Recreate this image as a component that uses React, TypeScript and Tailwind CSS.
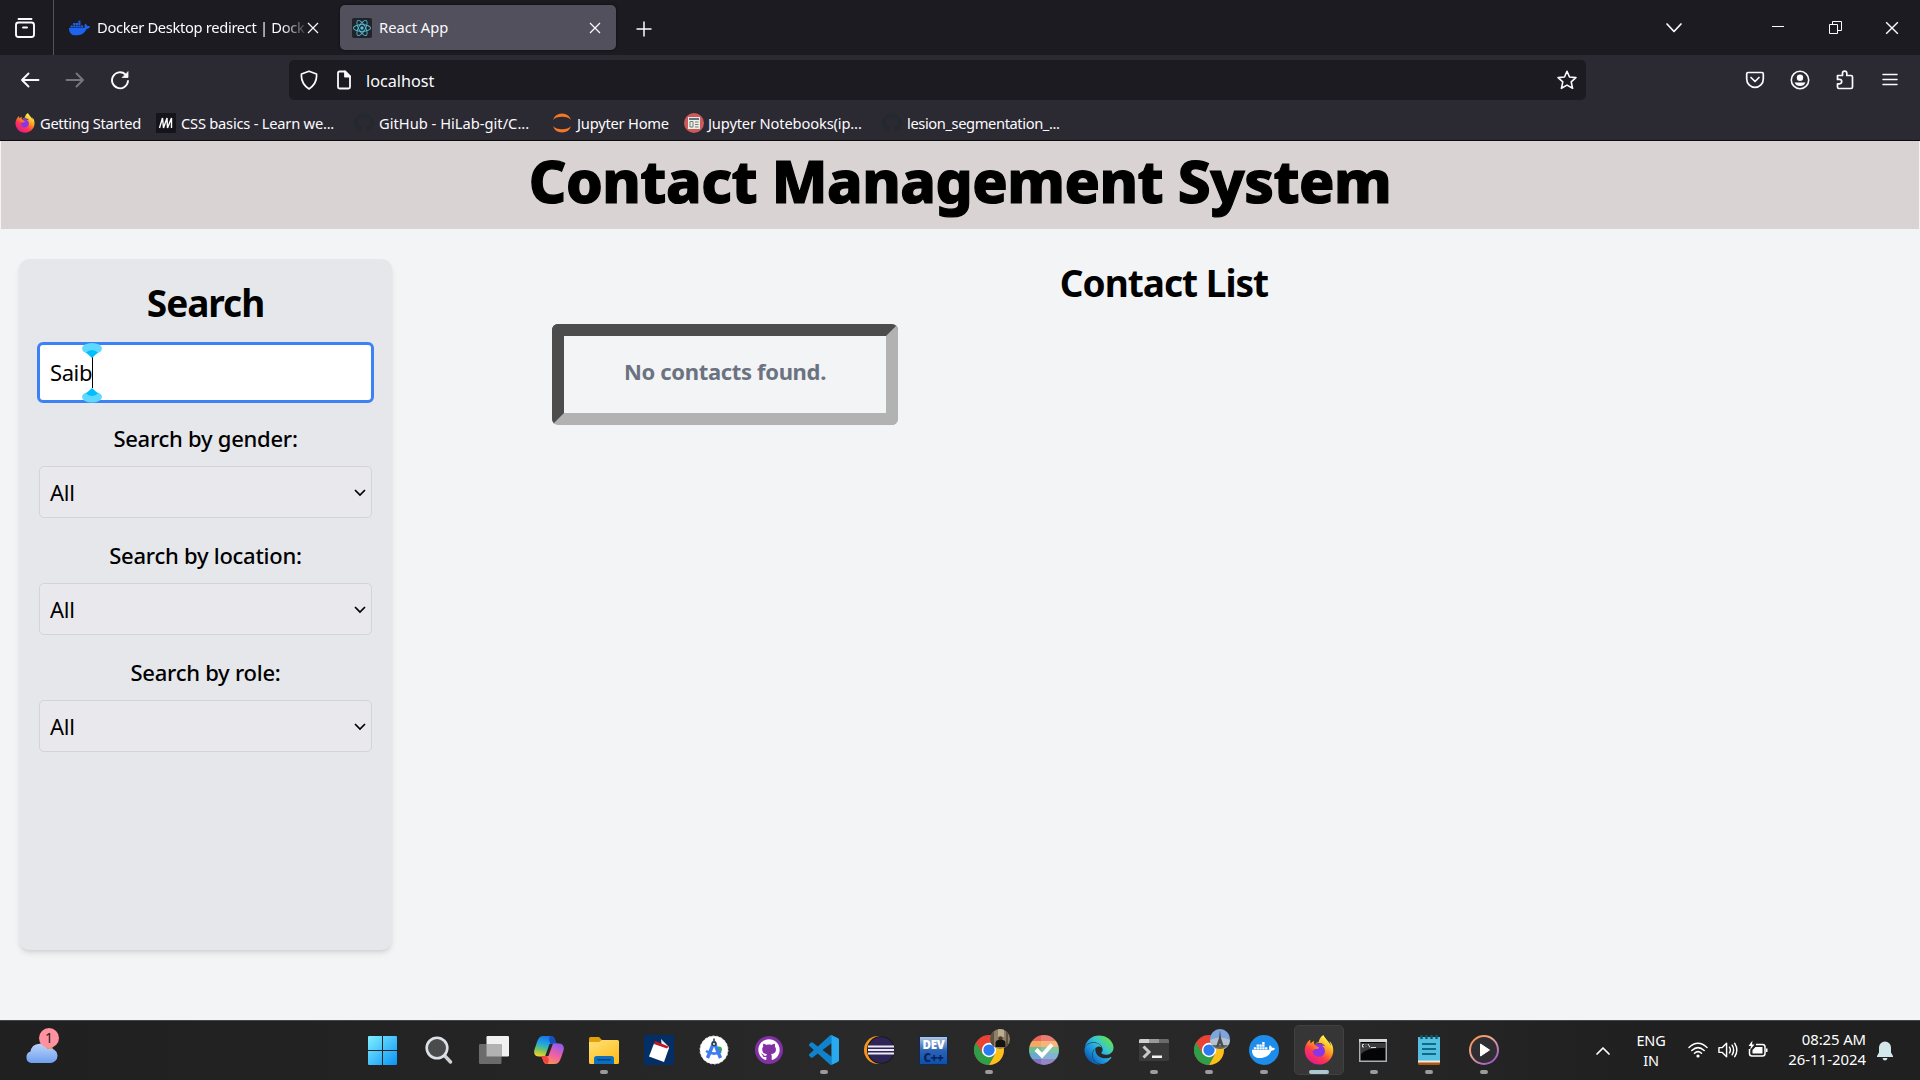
import React from "react";
import { FaDocker, FaFirefoxBrowser, FaGithub, FaEdge } from "react-icons/fa";
import { SiReact } from "react-icons/si";

const faces = "font-['Noto_Sans','Open_Sans',sans-serif]";

function Firefox({ className, id }: { className: string; id: string }) {
  return (
    <span className={`relative block ${className}`}>
      <svg className="absolute h-0 w-0">
        <defs>
          <linearGradient id={id} x1="0.85" y1="0.05" x2="0.25" y2="1">
            <stop offset="0.1" stopColor="#fff04a" />
            <stop offset="0.4" stopColor="#ff9a1f" />
            <stop offset="0.65" stopColor="#ff3a4a" />
            <stop offset="1" stopColor="#e0159a" />
          </linearGradient>
        </defs>
      </svg>
      <svg viewBox="0 0 32 32" className="absolute inset-0 h-full w-full">
        <circle cx="16" cy="17.5" r="8.5" fill="#8a35e8" />
      </svg>
      <FaFirefoxBrowser className="absolute inset-0 h-full w-full" style={{ fill: `url(#${id})` }} />
    </span>
  );
}

function Chrome() {
  return (
    <svg viewBox="0 0 48 48" className="h-[30px] w-[30px]">
      <circle cx="24" cy="24" r="24" fill="#ea4335" />
      <path d="M24 12.500H45A24 24 0 0 1 24 48L34 29.500Z" fill="#fbc116" />
      <path d="M3.200 12 13.800 30 24 35.500 34 29.500 24 48A24 24 0 0 1 3.200 12Z" fill="#2f9e46" />
      <circle cx="24" cy="24" r="11.500" fill="#fff" />
      <circle cx="24" cy="24" r="9" fill="#2a7bf0" />
    </svg>
  );
}

function Windows() {
  return (
    <svg viewBox="0 0 29 29" className="mr-[2px] h-[29px] w-[29px]">
      <defs>
        <linearGradient id="win" x1="0" y1="0" x2="29" y2="29" gradientUnits="userSpaceOnUse">
          <stop stopColor="#7ff0ff" />
          <stop offset="1" stopColor="#0a93f5" />
        </linearGradient>
      </defs>
      <path d="M0 1a1 1 0 0 1 1-1H14V14H0ZM15 0H28a1 1 0 0 1 1 1V14H15ZM0 15H14V29H1a1 1 0 0 1-1-1ZM15 15H29V28a1 1 0 0 1-1 1H15Z" fill="url(#win)" />
    </svg>
  );
}

function SearchGlass() {
  return (
    <svg viewBox="0 0 28 28" className="h-[28px] w-[28px]" fill="none">
      <path d="M19 19 25.500 26" stroke="#cfd3d8" strokeWidth="3.400" strokeLinecap="round" />
      <circle cx="12" cy="12" r="10.300" fill="#4a4b4c" stroke="#dde1e5" strokeWidth="2.600" />
    </svg>
  );
}

function TaskView() {
  return (
    <svg viewBox="0 0 30 28" className="ml-px h-[28px] w-[30px]">
      <rect x="7.500" y="0" width="22.500" height="20.500" rx="1.200" fill="#f1f1f1" />
      <rect x="0" y="8" width="22.500" height="20" rx="1.200" fill="#6b6b6b" />
      <rect x="7.500" y="8" width="15" height="12.500" fill="#b2b2b2" />
    </svg>
  );
}

function Copilot() {
  return (
    <svg viewBox="0 0 30 28" className="h-[28px] w-[30px]">
      <defs>
        <linearGradient id="cpa" x1="0.600" y1="0" x2="0.300" y2="1">
          <stop stopColor="#1a6fe0" />
          <stop offset="0.400" stopColor="#1ea5e6" />
          <stop offset="0.700" stopColor="#6cc36a" />
          <stop offset="1" stopColor="#f2d226" />
        </linearGradient>
        <linearGradient id="cpb" x1="0.800" y1="0" x2="0.300" y2="1">
          <stop stopColor="#8a5cf0" />
          <stop offset="0.500" stopColor="#ee5fa8" />
          <stop offset="1" stopColor="#ff9350" />
        </linearGradient>
      </defs>
      <path d="M7 20.500 H11 L15.500 8H24.500C22.500 8 21.800 6.500 21 4 20 1 19 0 17 0H9C5.500 0 4 3 2.500 7.500L.5 13.500C-.8 18 1.500 20.500 5 20.500Z" fill="url(#cpa)" />
      <path d="M16.500 0C19 0 20 1.500 21 4 21.800 6.500 22.500 8 24.500 8H17C15 6 14.500 2 16.500 0Z" fill="#154fc0" />
      <path d="M23 7.500H19L14.500 20H5.500C7.500 20 8.200 21.500 9 24 10 27 11 28 13 28H21C24.500 28 26 25 27.500 20.500L29.500 14.500C30.800 10 28.500 7.500 25 7.500Z" fill="url(#cpb)" />
      <path d="M13.500 28C11 28 10 26.500 9 24 8.200 21.500 7.500 20 5.500 20H13C15 22 15.500 26 13.500 28Z" fill="#f0453c" />
    </svg>
  );
}

function Explorer() {
  return (
    <svg viewBox="0 0 30 27" className="h-[27px] w-[30px]">
      <defs>
        <linearGradient id="fold" x1="0" y1="0" x2="0.700" y2="1">
          <stop stopColor="#ffe07a" />
          <stop offset="1" stopColor="#ffbf1f" />
        </linearGradient>
      </defs>
      <path d="M0 1.500Q0 0 1.500 0H10L13 3H28V9H0Z" fill="#e0a008" />
      <path d="M0 5H10L13 3H28.500Q30 3 30 4.500V25.500Q30 27 28.500 27H1.500Q0 27 0 25.500Z" fill="url(#fold)" />
      <path d="M5 27V21.500Q5 19 7.500 19H22.500Q25 19 25 21.500V27Z" fill="#0b70bf" />
      <rect x="8" y="22" width="14" height="1.500" rx="0.700" fill="#0a4377" />
    </svg>
  );
}

function CardBox() {
  return (
    <svg viewBox="0 0 30 30" className="h-[30px] w-[30px]">
      <rect width="30" height="30" fill="#042f66" />
      <path d="M17 4 25 12 19 24.500Z" fill="#e9eef5" />
      <path d="M10 8.500 25 13 20 27 5 21.500Z" fill="#fff" />
      <path d="M11 6 24.500 11.500 23 13.500 10 9Z" fill="#c9141f" />
    </svg>
  );
}

function AndroidStudio() {
  return (
    <svg viewBox="0 0 30 30" className="h-[30px] w-[30px]" fill="none">
      <circle cx="15" cy="15" r="14" fill="#fff" stroke="#e6e8ea" strokeWidth="1" strokeDasharray="2 2" />
      <circle cx="20" cy="14.500" r="3" fill="#34a853" />
      <path d="M15 7 8.500 23M15 7 21.500 23" stroke="#3d7df0" strokeWidth="3.400" />
      <path d="M7 16Q15 21 22 16.500" stroke="#3d7df0" strokeWidth="2.600" />
      <circle cx="15" cy="8.500" r="2.600" fill="#2c3f4c" />
      <circle cx="15" cy="9" r="1" fill="#fff" />
      <path d="M15 3.500V6" stroke="#2c3f4c" strokeWidth="1.600" />
    </svg>
  );
}

function GithubDesktop() {
  return (
    <span className="flex h-[28px] w-[28px] items-center justify-center rounded-full bg-[#8430a5]">
      <FaGithub className="h-[22px] w-[22px] text-white" />
    </span>
  );
}

function VsCode() {
  return (
    <svg viewBox="0 0 24 24" className="h-[30px] w-[30px]">
      <path
        d="M23.15 2.587L18.21.21a1.494 1.494 0 0 0-1.705.29l-9.46 8.63-4.12-3.128a.999.999 0 0 0-1.276.057L.327 7.261A1 1 0 0 0 .326 8.74L3.899 12 .326 15.26a1 1 0 0 0 .001 1.479L1.65 17.94a.999.999 0 0 0 1.276.057l4.12-3.128 9.46 8.63a1.492 1.492 0 0 0 1.704.29l4.942-2.377A1.5 1.5 0 0 0 24 20.06V3.939a1.5 1.5 0 0 0-.85-1.352zm-5.146 14.861L10.826 12l7.178-5.448v10.896z"
        fill="#0f83cc"
      />
      <path d="M18 .2 23.150 2.587A1.500 1.500 0 0 1 24 3.940V20.060A1.500 1.500 0 0 1 23.150 21.400L18.200 23.800Z" fill="#29a9f0" />
    </svg>
  );
}

function Eclipse() {
  return (
    <svg viewBox="0 0 30 30" className="h-[30px] w-[30px]">
      <circle cx="14" cy="15" r="14" fill="#f7941e" />
      <circle cx="17" cy="15" r="14" fill="#1d1b20" />
      <circle cx="17" cy="15" r="12.800" fill="#2f2458" />
      <path d="M4 11.500H30M4 15H30M4 18.500H30" stroke="#ece9f4" strokeWidth="1.800" />
    </svg>
  );
}

function DevCpp() {
  return (
    <span className="flex h-[29px] w-[29px] flex-col items-center border border-[#0c2a58] bg-gradient-to-b from-[#b5c5da] via-[#2a63b5] to-[#0d4fae] font-['Noto_Sans','Open_Sans',sans-serif] text-[11.500px] font-black leading-[13px] tracking-[-0.300px]">
      <span className="mt-px block h-[13px] text-white">DEV</span>
      <span className="block h-[13px] text-[#07255a]">C++</span>
    </span>
  );
}

function ChromeWork() {
  return (
    <span className="relative block">
      <Chrome />
      <svg viewBox="0 0 20 20" className="absolute -top-[6px] left-[16px] h-[20px] w-[20px]">
        <clipPath id="work">
          <circle cx="10" cy="10" r="10" />
        </clipPath>
        <g clipPath="url(#work)">
          <rect width="20" height="20" fill="#8e7f66" />
          <path d="M8 0H14V8H8Z" fill="#b9ad92" />
          <path d="M0 0H4V20H0ZM16 2H18V20H16Z" fill="#5d5242" />
          <circle cx="10.500" cy="9.500" r="2.200" fill="#4a372d" />
          <path d="M5.500 18V14Q5.500 10.800 10.500 10.800 15.500 10.800 15.500 14V18Z" fill="#15130f" />
        </g>
      </svg>
    </span>
  );
}

function ChromeTravel() {
  return (
    <span className="relative block">
      <Chrome />
      <svg viewBox="0 0 20 20" className="absolute -top-[6px] left-[16px] h-[20px] w-[20px]">
        <circle cx="10" cy="10" r="10" fill="#7fa6dc" />
        <path d="M0 11Q10 6 20 11A10 10 0 0 1 0 11Z" fill="#b3c3d3" />
        <path d="M2 16H18A10 10 0 0 1 2 16Z" fill="#5e6b5c" />
        <path d="M10 1 11 9 14 18H12L10 14.500 8 18H6L9 9Z" fill="#4f4a4b" />
      </svg>
    </span>
  );
}

function RainbowCheck() {
  return (
    <svg viewBox="0 0 30 30" className="h-[30px] w-[30px]">
      <clipPath id="rb">
        <circle cx="15" cy="15" r="15" />
      </clipPath>
      <g clipPath="url(#rb)">
        <rect width="30" height="6" fill="#e8665a" />
        <rect y="6" width="30" height="6" fill="#f3a863" />
        <rect y="12" width="30" height="6" fill="#6dbd94" />
        <rect y="18" width="30" height="6" fill="#6ba7cf" />
        <rect y="24" width="30" height="6" fill="#8670bd" />
        <rect x="12" width="18" height="30" fill="#fff" opacity="0.150" />
      </g>
      <path d="M7 14.500 13 20.500 23 9.500" stroke="#fff" strokeWidth="4" fill="none" />
    </svg>
  );
}

function Edge() {
  return (
    <>
      <svg className="absolute h-0 w-0">
        <linearGradient id="edge" x1="0.900" y1="0.200" x2="0.200" y2="0.900">
          <stop stopColor="#5fe05a" />
          <stop offset="0.350" stopColor="#35c4d8" />
          <stop offset="0.700" stopColor="#1a8fdc" />
          <stop offset="1" stopColor="#0c58a8" />
        </linearGradient>
      </svg>
      <FaEdge className="h-[30px] w-[30px]" style={{ fill: "url(#edge)" }} />
    </>
  );
}

function Terminal() {
  return (
    <svg viewBox="0 0 30 22" className="h-[22px] w-[30px]">
      <rect width="30" height="22" rx="1.500" fill="#3a3a3a" />
      <path d="M0 4V1.500Q0 0 1.500 0H10V4Z" fill="#d0d0d0" />
      <path d="M10 0H20V4H10Z" fill="#9a9a9a" />
      <path d="M20 0H28.500Q30 0 30 1.500V4H20Z" fill="#6b6b6b" />
      <path d="M4.500 7.500 10 13 4.500 18.500" fill="none" stroke="#c9c9c9" strokeWidth="3" />
      <rect x="13" y="16.500" width="10" height="2.500" fill="#f2f2f2" />
    </svg>
  );
}

function DockerApp() {
  return (
    <span className="flex h-[30px] w-[30px] items-center justify-center rounded-full bg-[#1d8ceb]">
      <FaDocker className="h-[24px] w-[23px] text-white" />
    </span>
  );
}

function Cmd() {
  return (
    <svg viewBox="0 0 28 23" className="mr-px h-[23px] w-[28px]">
      <rect x="0.750" y="0.750" width="26.500" height="21.500" fill="#050505" stroke="#a9b0b4" strokeWidth="1.500" />
      <path d="M0 0H28V3H0Z" fill="#d3d8db" />
      <path d="M2 4H26V9Q8 8 2 15Z" fill="#3b3b3b" />
      <path d="M5 5.500H3.500V8H5M7 5.500V6M7 7.500V8M9 5 11 8.500M12 8.500H17" stroke="#ddd" strokeWidth="1" fill="none" />
    </svg>
  );
}

function Notepad() {
  return (
    <svg viewBox="0 0 22 30" className="h-[30px] w-[22px]">
      <rect y="2" width="22" height="26" fill="#54bfe0" />
      <path d="M0 25.500H22V28H0Z" fill="#efe9e0" />
      <path d="M0 27.500H22V28.500Q22 30 20.500 30H1.500Q0 30 0 28.500Z" fill="#b1560f" />
      <path d="M3.500 0V4M8.500 0V4M13.500 0V4M18.500 0V4" stroke="#0f5770" strokeWidth="2.400" />
      <path d="M4 9H18M4 14H18M4 19H18" stroke="#0f6a86" strokeWidth="1.800" />
    </svg>
  );
}

function MediaPlayer() {
  return (
    <svg viewBox="0 0 30 30" className="h-[30px] w-[30px]">
      <defs>
        <linearGradient id="mp" x1="0" y1="0" x2="0.800" y2="1">
          <stop stopColor="#ff8a3c" />
          <stop offset="0.450" stopColor="#e8a898" />
          <stop offset="1" stopColor="#9a55c8" />
        </linearGradient>
      </defs>
      <circle cx="15" cy="15" r="14" fill="#2f2f33" stroke="url(#mp)" strokeWidth="2" />
      <path d="M11.500 9 20.500 15 11.500 21Z" fill="#fff" stroke="#fff" strokeLinejoin="round" />
    </svg>
  );
}

type App = { name: string; icon: React.ReactNode; state?: "open" | "active" };

const apps: App[] = [
  { name: "Start", icon: <Windows /> },
  { name: "Search", icon: <SearchGlass /> },
  { name: "Task View", icon: <TaskView /> },
  { name: "Copilot", icon: <Copilot /> },
  { name: "File Explorer", icon: <Explorer />, state: "open" },
  { name: "Cards", icon: <CardBox /> },
  { name: "Android Studio", icon: <AndroidStudio /> },
  { name: "GitHub Desktop", icon: <GithubDesktop /> },
  { name: "Visual Studio Code", icon: <VsCode />, state: "open" },
  { name: "Eclipse", icon: <Eclipse /> },
  { name: "Dev-C++", icon: <DevCpp /> },
  { name: "Chrome", icon: <ChromeWork />, state: "open" },
  { name: "Tasks", icon: <RainbowCheck /> },
  { name: "Edge", icon: <Edge /> },
  { name: "Terminal", icon: <Terminal />, state: "open" },
  { name: "Chrome (travel)", icon: <ChromeTravel />, state: "open" },
  { name: "Docker Desktop", icon: <DockerApp />, state: "open" },
  { name: "Firefox", icon: <Firefox id="ff-task" className="h-[30px] w-[30px]" />, state: "active" },
  { name: "Command Prompt", icon: <Cmd />, state: "open" },
  { name: "Notepad", icon: <Notepad />, state: "open" },
  { name: "Media Player", icon: <MediaPlayer />, state: "open" },
];

function Cross({ className }: { className: string }) {
  return (
    <svg viewBox="0 0 12 12" className={className} fill="none" stroke="#fbfbfe" strokeWidth="1.200">
      <path d="M1 1 11 11M11 1 1 11" />
    </svg>
  );
}

function TabStrip() {
  return (
    <div className="flex h-[55px] bg-[#1c1b22] text-[14.700px] text-[#fbfbfe]">
      <div className="flex w-[54px] items-center border-r border-[#55545c] pl-[14px]">
        <svg viewBox="0 0 22 22" className="h-[22px] w-[22px]" fill="none" stroke="#fbfbfe" strokeWidth="1.900" strokeLinecap="round">
          <path d="M4.500 2H17.500" />
          <rect x="2" y="5.500" width="18" height="14.500" rx="2.500" />
          <path d="M9 10.500H13" />
        </svg>
      </div>
      <div className="flex w-[286px] items-center pl-[15px]">
        <FaDocker className="mr-[7px] h-[24px] w-[21px] text-[#1d63ed]" />
        <div className="w-[209px] whitespace-nowrap tracking-[-0.320px] [mask-image:linear-gradient(to_right,black_185px,transparent_212px)]">
          Docker Desktop redirect | Dock
        </div>
        <Cross className="ml-px h-[12px] w-[12px]" />
      </div>
      <div className="mt-[5px] flex h-[45px] w-[276px] items-center rounded-[5px] bg-[#52505d] pl-[12px] shadow-[0_0_3px_rgba(0,0,0,0.6)]">
        <span className="mr-[7px] flex h-[20px] w-[20px] items-center justify-center rounded-[2px] bg-[#20232a]">
          <SiReact className="h-[18px] w-[18px] text-[#57c4dc]" />
        </span>
        <span>React App</span>
        <Cross className="ml-auto mr-[15px] h-[12px] w-[12px]" />
      </div>
      <svg viewBox="0 0 16 16" className="ml-[20px] mt-[21px] h-[16px] w-[16px]" stroke="#fbfbfe" strokeWidth="1.500">
        <path d="M8 0.500V15.500M0.500 8H15.500" />
      </svg>
      <div className="ml-auto flex items-center">
        <svg viewBox="0 0 18 12" className="mr-[89px] h-[12px] w-[18px]" fill="none" stroke="#fbfbfe" strokeWidth="1.700" strokeLinecap="round" strokeLinejoin="round">
          <path d="M2 2 9 9.500 16 2" />
        </svg>
        <span className="mb-[2px] mr-[45px] h-px w-[12px] bg-[#fbfbfe]" />
        <svg viewBox="0 0 13 13" className="mr-[43px] h-[13px] w-[13px]" fill="none" stroke="#fbfbfe">
          <path d="M0.500 3.500H8.500V12.500H0.500ZM3.500 3.500V0.500H12.500V9.500H8.500" />
        </svg>
        <Cross className="mr-[21px] h-[14px] w-[14px]" />
      </div>
    </div>
  );
}

function Toolbar() {
  return (
    <div className="flex h-[50px] items-center bg-[#2b2a33] text-[#fbfbfe]">
      <svg viewBox="0 0 20 20" className="ml-[20px] h-[20px] w-[20px]" fill="none" stroke="#fbfbfe" strokeWidth="1.900" strokeLinecap="round" strokeLinejoin="round">
        <path d="M18.500 10H2M8.500 3.500 2 10 8.500 16.500" />
      </svg>
      <svg viewBox="0 0 20 20" className="ml-[25px] h-[20px] w-[20px]" fill="none" stroke="#77767f" strokeWidth="1.900" strokeLinecap="round" strokeLinejoin="round">
        <path d="M1.500 10H18M11.500 3.500 18 10 11.500 16.500" />
      </svg>
      <svg viewBox="0 0 20 20" className="ml-[25px] h-[20px] w-[20px]" fill="none" stroke="#fbfbfe" strokeWidth="1.900" strokeLinecap="round" strokeLinejoin="round">
        <path d="M18 11A8 8 0 1 1 15.500 4.500" />
        <path d="M18 2V7.500H12.500Z" fill="#fbfbfe" strokeWidth="0.800" />
      </svg>
      <div className="ml-[159px] flex h-[40px] w-[1297px] items-center rounded-[5px] bg-[#1c1b22] pl-[10px] pr-[9px]">
        <svg viewBox="0 0 20 20" className="h-[20px] w-[20px]" fill="none" stroke="#fbfbfe" strokeWidth="1.700" strokeLinejoin="round">
          <path d="M10 1.200 17.500 4Q18.500 13 10 19 1.500 13 2.500 4Z" />
        </svg>
        <svg viewBox="0 0 20 20" className="ml-[15px] h-[20px] w-[20px]" fill="none" stroke="#fbfbfe" strokeWidth="1.800" strokeLinejoin="round">
          <path d="M11 1.500H5.500Q4 1.500 4 3V17Q4 18.500 5.500 18.500H14.500Q16 18.500 16 17V6.500Z" />
          <path d="M11 1.500V6.500H16Z" fill="#fbfbfe" />
        </svg>
        <span className="ml-[12px] mt-[2px] text-[16.200px] leading-[24px]">localhost</span>
        <svg viewBox="0 0 20 20" className="ml-auto h-[20px] w-[20px]" fill="none" stroke="#fbfbfe" strokeWidth="1.600" strokeLinejoin="round">
          <path d="M10 1.300 12.500 7 18.900 7.600 14.200 11.900 15.600 18.300 10 15.100 4.400 18.300 5.800 11.900 1.100 7.600 7.500 7Z" />
        </svg>
      </div>
      <div className="ml-auto flex items-center pr-[20px]">
        <svg viewBox="0 0 20 20" className="h-[20px] w-[20px]" fill="none" stroke="#fbfbfe" strokeWidth="1.700" strokeLinecap="round" strokeLinejoin="round">
          <path d="M3 2.500H17Q18.300 2.500 18.300 4V9A8.300 8.300 0 0 1 1.700 9V4Q1.700 2.500 3 2.500Z" />
          <path d="M6 7.500 10 11.500 14 7.500" />
        </svg>
        <svg viewBox="0 0 20 20" className="ml-[25px] h-[20px] w-[20px]" fill="none" stroke="#fbfbfe" strokeWidth="1.600">
          <circle cx="10" cy="10" r="8.700" />
          <circle cx="10" cy="7.700" r="3.200" fill="#fbfbfe" stroke="none" />
          <path d="M4.500 12.500H15.500Q14 16 10 16 6 16 4.500 12.500Z" fill="#fbfbfe" stroke="none" />
        </svg>
        <svg viewBox="0 0 20 20" className="ml-[25px] h-[20px] w-[20px]" fill="none" stroke="#fbfbfe" strokeWidth="1.700" strokeLinejoin="round">
          <path d="M2.500 5.500H7.500V3.200A2.100 2.100 0 0 1 11.800 3.200V5.500H16Q17.500 5.500 17.500 7V17Q17.500 18.500 16 18.500H4Q2.500 18.500 2.500 17V13.800H4.500A2.200 2.200 0 0 0 4.500 9.400H2.500Z" />
        </svg>
        <svg viewBox="0 0 20 20" className="ml-[25px] h-[20px] w-[20px]" stroke="#fbfbfe" strokeWidth="1.500" strokeLinecap="round">
          <path d="M3 4.500H17M3 9.500H17M3 14.500H17" />
        </svg>
      </div>
    </div>
  );
}

function JupyterHome() {
  return (
    <svg viewBox="0 0 20 20" className="h-[20px] w-[20px]" fill="#f37726">
      <path d="M1 7Q3 .5 10 .5 17 .5 19 7 16 3.800 10 3.800 4 3.800 1 7ZM1 13Q3 19.500 10 19.500 17 19.500 19 13 16 16.200 10 16.200 4 16.200 1 13Z" />
    </svg>
  );
}

function BookmarksBar() {
  return (
    <div className="flex h-[36px] items-center whitespace-nowrap border-b border-[#0c0c0d] bg-[#2b2a33] pl-[15px] pt-px text-[14.700px] text-[#fbfbfe]">
      <div className="flex w-[141px] items-center gap-[5px]">
        <Firefox id="ff-mark" className="h-[20px] w-[20px]" />
        <span className="tracking-[-0.310px]">Getting Started</span>
      </div>
      <div className="flex w-[198px] items-center gap-[5px]">
        <svg viewBox="0 0 20 20" className="h-[20px] w-[20px]">
          <rect width="20" height="20" fill="#15141a" />
          <path d="M3.500 15 6.500 5 7.500 15 11 5 11.500 15 15.500 5V15" fill="none" stroke="#fff" strokeWidth="1.400" />
        </svg>
        <span className="tracking-[-0.230px]">CSS basics - Learn we...</span>
      </div>
      <div className="flex w-[198px] items-center gap-[5px]">
        <FaGithub className="h-[20px] w-[20px] text-[#24292e]" />
        <span>GitHub - HiLab-git/C...</span>
      </div>
      <div className="flex w-[132px] items-center gap-[5px]">
        <JupyterHome />
        <span className="tracking-[-0.220px]">Jupyter Home</span>
      </div>
      <div className="flex w-[198px] items-center gap-[4px]">
        <svg viewBox="0 0 20 20" className="h-[20px] w-[20px]">
          <circle cx="10" cy="10" r="10" fill="#cc5a5a" />
          <rect x="4" y="4" width="12" height="12" fill="#f0ece0" />
          <path d="M5 6H15" stroke="#2f4a5c" strokeWidth="1.500" />
          <path d="M6 8.500H9V14H6ZM11 9H14.500M11 11.500H14.500M11 14H14.500" stroke="#6a7d88" fill="none" />
        </svg>
        <span className="tracking-[-0.150px]">Jupyter Notebooks(ip...</span>
      </div>
      <div className="flex items-center gap-[5px]">
        <FaGithub className="h-[20px] w-[20px] text-[#24292e]" />
        <span className="tracking-[-0.400px]">lesion_segmentation_...</span>
      </div>
    </div>
  );
}

function SelectField({ label }: { label: string }) {
  return (
    <div className="flex h-[117px] flex-col items-stretch">
      <label className="mt-[18px] text-center text-[22px] font-medium leading-[34px] tracking-[-0.260px]">{label}</label>
      <div className="mt-[11px] flex h-[52px] items-center justify-between rounded-[5px] border border-[#d1d5db] bg-[#e9e9ed] pl-[10px] pr-[5px] text-[22px]">
        <span className="tracking-[-0.200px]">All</span>
        <svg viewBox="0 0 12 8" className="mt-px h-[8px] w-[12px]" fill="none" stroke="#000" strokeWidth="1.700">
          <path d="M1 1 6 6 11 1" />
        </svg>
      </div>
    </div>
  );
}

function SearchPanel() {
  return (
    <aside className="ml-[19px] mt-[30px] h-[691px] w-[373px] rounded-[10px] bg-[#e5e7eb] px-[20px] pt-[21px] shadow-md">
      <h2 className="text-center text-[37px] font-bold leading-[45px] tracking-[-1.050px]">Search</h2>
      <div className="relative -mx-[2px] mt-[17px] flex h-[61px] items-center rounded-[6px] border-[3px] border-[#3b82f6] bg-white pl-[10px] text-[22px]">
        <span className="tracking-[-0.400px]">Saib</span>
        <span className="absolute left-[52px] top-[12px] h-[31px] w-px bg-black" />
        <svg viewBox="0 0 20 60" className="absolute -top-[2px] left-[42px] h-[60px] w-[20px]">
          <ellipse cx="10" cy="5.500" rx="10" ry="5.500" fill="#5fd8ff" />
          <path d="M4 9.500Q10 4.500 16 9.500L10 15Z" fill="#00bfff" />
          <ellipse cx="10" cy="54" rx="10" ry="5.500" fill="#5fd8ff" />
          <path d="M4 50.500Q10 55.500 16 50.500L10 45Z" fill="#00bfff" />
        </svg>
      </div>
      <SelectField label="Search by gender:" />
      <SelectField label="Search by location:" />
      <SelectField label="Search by role:" />
    </aside>
  );
}

function ContactList() {
  return (
    <section className="ml-[160px] mt-[30px] w-[1224px]">
      <h2 className="text-center text-[37px] font-bold leading-[48px] tracking-[-1px]">Contact List</h2>
      <div className="mt-[17px] flex h-[101px] w-[346px] items-start justify-center rounded-[6px] border-[12px] border-b-[#b2b2b2] border-l-[#4c4c4c] border-r-[#b2b2b2] border-t-[#4c4c4c] pt-[18px] text-[22px] font-bold leading-[34px] tracking-[-0.340px] text-[#6b7280]">
        No contacts found.
      </div>
    </section>
  );
}

function Taskbar() {
  return (
    <div className="relative flex h-[60px] border-t border-[#454647] bg-[linear-gradient(90deg,#202020_0%,#232323_20%,#292929_45%,#272727_70%,#202020_85%)] text-[15px] text-white">
      <div className="w-[356px] pl-[23px] pt-[7px]">
        <svg viewBox="0 0 36 36" className="h-[36px] w-[36px]">
          <defs>
            <linearGradient id="cloud" x1="0" y1="0" x2="0" y2="1">
              <stop stopColor="#b9d4fb" />
              <stop offset="1" stopColor="#6f9fee" />
            </linearGradient>
          </defs>
          <circle cx="22" cy="22" r="8" fill="#f58a1c" />
          <path d="M8 35A6 6 0 0 1 7.500 23.500 9 9 0 0 1 24.500 21 7.300 7.300 0 1 1 26 35Z" fill="url(#cloud)" />
          <circle cx="26" cy="10" r="10" fill="#ff929e" />
          <text x="26" y="15" textAnchor="middle" fontSize="14" fill="#1b1b1b" fontFamily="Noto Sans, sans-serif">1</text>
        </svg>
      </div>
      <div className="flex">
        {apps.map((app) => (
          <div key={app.name} title={app.name} className="flex w-[55px] justify-center pt-[4px]">
            <div
              className={
                app.state === "active"
                  ? "flex h-[50px] w-[50px] flex-col items-center rounded-[5px] border border-[#414141] bg-[#363636]"
                  : "flex h-[50px] w-[50px] flex-col items-center border border-transparent"
              }
            >
              <div className="mt-[9px] flex h-[30px] items-center justify-center">{app.icon}</div>
              {app.state === "open" && <span className="mt-[5px] h-[4px] w-[8px] rounded-full bg-[#9b9b9b]" />}
              {app.state === "active" && <span className="mt-[5px] h-[4px] w-[20px] rounded-full bg-[#adc8d0]" />}
            </div>
          </div>
        ))}
      </div>
      <svg viewBox="0 0 14 9" className="ml-[85px] mt-[25px] h-[9px] w-[14px]" fill="none" stroke="#fff" strokeWidth="1.700" strokeLinecap="round" strokeLinejoin="round">
        <path d="M1 8 7 2 13 8" />
      </svg>
      <div className="ml-[20px] mt-[9px] w-[42px] text-center text-[14.500px] leading-[20px] tracking-[-0.200px]">
        <div>ENG</div>
        <div>IN</div>
      </div>
      <svg viewBox="0 0 20 16" className="ml-[16px] mt-[21px] h-[16px] w-[20px]" fill="none" stroke="#fff" strokeWidth="1.500" strokeLinecap="round">
        <path d="M1 5.500Q10-3 19 5.500M3.800 8.500Q10 2.700 16.200 8.500M6.500 11.300Q10 8 13.500 11.300" />
        <circle cx="10" cy="14" r="1.600" fill="#fff" stroke="none" />
      </svg>
      <svg viewBox="0 0 22 18" className="ml-[10px] mt-[20px] h-[18px] w-[21px]" fill="none" stroke="#fff" strokeWidth="1.500" strokeLinecap="round" strokeLinejoin="round">
        <path d="M1 6.500H4.500L9 2V16L4.500 11.500H1Z" />
        <path d="M12 6Q14 9 12 12M14.800 4Q18 9 14.800 14M17.500 2Q22 9 17.500 16" />
      </svg>
      <svg viewBox="0 0 20 18" className="ml-[9px] mt-[19px] h-[18px] w-[20px]" fill="none" stroke="#fff" strokeWidth="1.500" strokeLinejoin="round">
        <path d="M8 4.500H14.500Q17 4.500 17 7V13.500Q17 16 14.500 16H4Q1.500 16 1.500 13.500V9" />
        <path d="M7.500 7H14.500V13.500H4.500V10Z" fill="#fff" stroke="none" />
        <path d="M18 8.500H19.500V12H18Z" fill="#fff" stroke="none" />
        <path d="M4.500 0.500 0.500 6H3L2 10 6.500 4.500H4Z" fill="#fff" stroke="none" />
      </svg>
      <div className="ml-[10px] mt-[8px] w-[88px] text-right text-[14.900px] leading-[20px]">
        <div className="tracking-[-0.100px]">08:25 AM</div>
        <div>26-11-2024</div>
      </div>
      <svg viewBox="0 0 18 20" className="ml-[10px] mt-[20px] h-[20px] w-[18px]" fill="#d3e7eb">
        <path d="M9 0.500A6 6 0 0 1 15 6.500V11.500L17 15V16H1V15L3 11.500V6.500A6 6 0 0 1 9 .5ZM6.500 17H11.500Q11 19.500 9 19.500 7 19.500 6.500 17Z" />
      </svg>
    </div>
  );
}

export default function App() {
  return (
    <div className={`flex h-[1080px] w-[1920px] flex-col overflow-hidden bg-[#f3f4f6] text-black ${faces}`}>
      <TabStrip />
      <Toolbar />
      <BookmarksBar />
      <header className="mx-px h-[88px] bg-[#d9d3d3] text-center text-[58.500px] font-extrabold leading-[79px] tracking-[-0.500px] [-webkit-text-stroke:1.200px_black]">
        Contact Management System
      </header>
      <main className="flex flex-1">
        <SearchPanel />
        <ContactList />
      </main>
      <Taskbar />
    </div>
  );
}
